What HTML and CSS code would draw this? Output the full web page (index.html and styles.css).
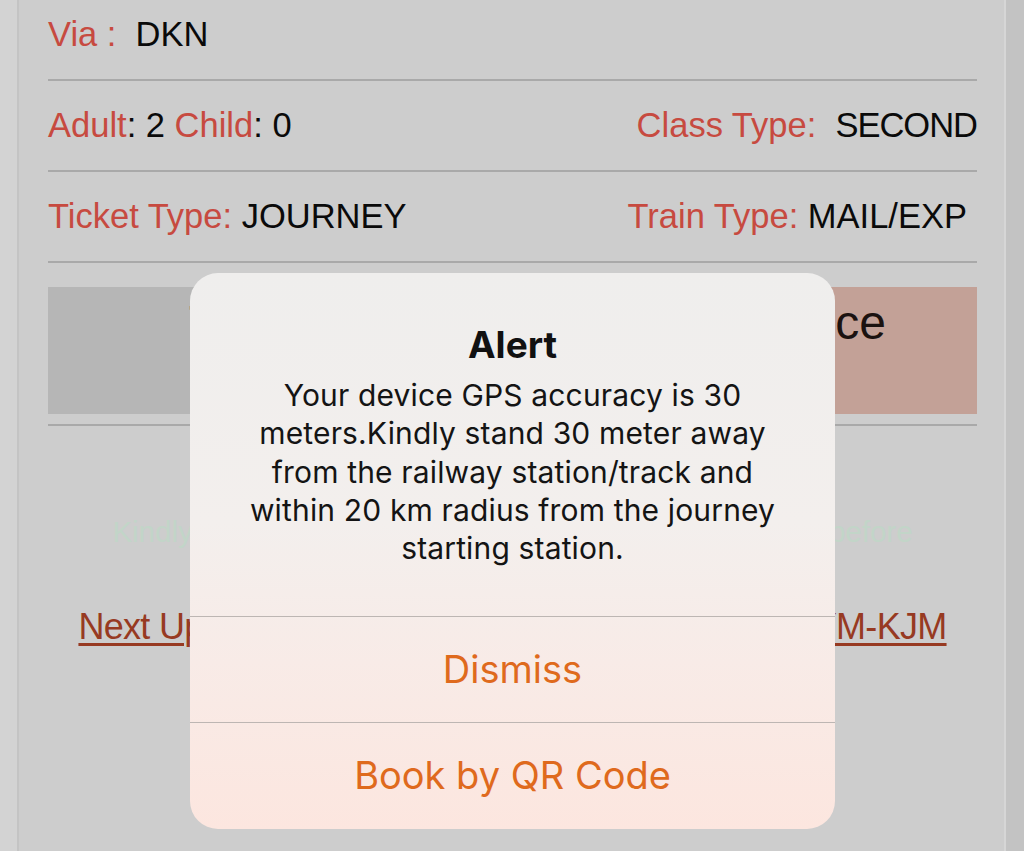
FILE: index.html
```html
<!DOCTYPE html>
<html>
<head>
<meta charset="utf-8">
<link rel="stylesheet" href="styles.css">
</head>
<body>
<div class="page">
  <div class="side side-left"></div>
  <main class="content">
    <div class="row">
      <span class="lbl">Via :</span>&nbsp;&nbsp;<span class="val">DKN</span>
    </div>
    <div class="row split">
      <span><span class="lbl">Adult</span><span class="val">: 2</span> <span class="lbl">Child</span><span class="val">: 0</span></span>
      <span><span class="lbl">Class Type:</span>&nbsp;&nbsp;<span class="val tight">SECOND</span></span>
    </div>
    <div class="row split">
      <span><span class="lbl">Ticket Type:</span>&nbsp;<span class="val">JOURNEY</span></span>
      <span class="right-pad"><span class="lbl">Train Type:</span> <span class="val">MAIL/EXP</span></span>
    </div>
    <div class="actions">
      <div class="btn btn-gray">Tatkal</div>
      <div class="btn btn-pink">Balance</div>
    </div>
    <p class="hint">Kindly ensure GPS accuracy and your current location before</p>
    <p class="next"><a href="#">Next Upcoming Train: 16021 EXP 12:30 SBC-MYM-KJM</a></p>
  </main>
  <div class="side side-right"></div>
</div>

<div class="alert">
  <div class="alert-body">
    <h2 class="alert-title">Alert</h2>
    <p class="alert-msg">Your device GPS accuracy is 30<br>meters.Kindly stand 30 meter away<br>from the railway station/track and<br>within 20 km radius from the journey<br>starting station.</p>
  </div>
  <div class="alert-btn">Dismiss</div>
  <div class="alert-btn">Book by QR Code</div>
</div>
</body>
</html>
```
FILE: styles.css
```css
html, body {
  margin: 0;
  padding: 0;
  height: 100%;
  overflow: hidden;
}
body {
  background: #cdcdcd;
  font-family: "Liberation Sans", Arial, sans-serif;
}
.page {
  display: flex;
  height: 851px;
}
.side-left {
  width: 17px;
  background: #d3d3d3;
  border-right: 2px solid #c4c4c4;
}
.side-right {
  width: 18px;
  background: #c3c3c3;
  border-left: 2px solid #d6d6d6;
}
.content {
  flex: 1;
  background: #cdcdcd;
  padding: 0 27px 0 29px;
  margin-top: -10px;
}
.row {
  height: 89px;
  line-height: 89px;
  border-bottom: 2px solid #a9a9a9;
  font-size: 34.5px;
  white-space: nowrap;
}
.split {
  display: flex;
  justify-content: space-between;
}
.right-pad {
  padding-right: 10px;
}
.lbl {
  color: #c74a40;
}
.val {
  color: #0a0a0a;
}
.tight {
  letter-spacing: -1px;
}
.actions {
  display: flex;
  gap: 14px;
  margin-top: 24px;
  padding-bottom: 10px;
  border-bottom: 2px solid #a9a9a9;
}
.btn {
  flex: 1;
  height: 127px;
  box-sizing: border-box;
  padding-top: 8px;
  font-size: 48px;
  line-height: 56px;
  color: #1b1210;
}
.btn-gray {
  background: #b6b6b6;
  padding-left: 141px;
}
.btn-pink {
  background: #c3a197;
  text-align: right;
  padding-right: 91px;
}
.hint {
  margin: 88px 0 0;
  text-align: center;
  font-size: 29.5px;
  line-height: 36px;
  color: #c2d5c8;
  white-space: nowrap;
}
.next {
  margin: 57px 0 0;
  text-align: center;
  font-size: 36px;
  line-height: 40px;
  letter-spacing: -0.7px;
  white-space: nowrap;
}
.next a {
  color: #973a22;
  text-decoration: underline;
  text-decoration-thickness: 3px;
  text-underline-offset: 4px;
}

.alert {
  position: absolute;
  top: 273px;
  left: 190px;
  width: 645px;
  height: 556px;
  border-radius: 28px;
  overflow: hidden;
  background: linear-gradient(180deg, #efeeed 0%, #f3efed 45%, #f8ebe7 70%, #fce6df 100%);
  font-family: Inter, "Noto Sans", sans-serif;
  display: flex;
  flex-direction: column;
}
.alert-body {
  height: 344px;
  box-sizing: border-box;
  padding: 50px 20px 0;
  text-align: center;
  border-bottom: 1.5px solid #bdb6b3;
}
.alert-title {
  margin: 0;
  font-size: 37px;
  line-height: 44px;
  font-weight: 700;
  color: #111;
}
.alert-msg {
  margin: 9px 0 0;
  font-size: 30px;
  line-height: 38.3px;
  letter-spacing: 0.15px;
  color: #141414;
}
.alert-btn {
  height: 105px;
  line-height: 105px;
  text-align: center;
  font-size: 38px;
  color: #df6a1d;
}
.alert-btn + .alert-btn {
  border-top: 1.5px solid #bdb6b3;
}
```
